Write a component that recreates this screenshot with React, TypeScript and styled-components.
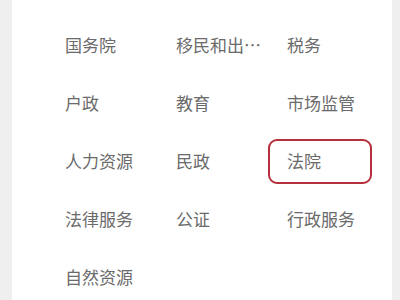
import React from "react";
import styled, { createGlobalStyle } from "styled-components";

const Global = createGlobalStyle`
  html, body { margin: 0; padding: 0; background: #efefef; }
  body { font-family: "Noto Sans CJK SC", "Noto Sans", sans-serif; }
`;

const Page = styled.div`
  display: flex;
  height: 300px;
  overflow: hidden;
`;

const Panel = styled.div`
  margin-left: 12px;
  width: 380px;
  height: 300px;
  background: #ffffff;
  padding: 16px 0 0 34px;
  box-sizing: border-box;
`;

const Grid = styled.div`
  display: grid;
  grid-template-columns: repeat(3, 111px);
  grid-auto-rows: 58px;
`;

const Cell = styled.div`
  display: flex;
  align-items: center;
`;

const Item = styled.div<{ $active?: boolean }>`
  box-sizing: border-box;
  width: 104px;
  height: 45px;
  display: flex;
  align-items: center;
  padding-left: 17px;
  border: 2px solid ${(p) => (p.$active ? "#b5303a" : "transparent")};
  border-radius: 9px;
`;

const Label = styled.span`
  flex-shrink: 0;
  font-size: 17px;
  color: #6b6b6b;
  white-space: nowrap;
  overflow: hidden;
  text-overflow: ellipsis;
  max-width: 88px;
  line-height: 24px;
`;

const items = [
  "国务院",
  "移民和出入境",
  "税务",
  "户政",
  "教育",
  "市场监管",
  "人力资源",
  "民政",
  "法院",
  "法律服务",
  "公证",
  "行政服务",
  "自然资源",
];

export default function App() {
  return (
    <>
      <Global />
      <Page>
        <Panel>
          <Grid>
            {items.map((t) => (
              <Cell key={t}>
                <Item $active={t === "法院"}>
                  <Label>{t}</Label>
                </Item>
              </Cell>
            ))}
          </Grid>
        </Panel>
      </Page>
    </>
  );
}
